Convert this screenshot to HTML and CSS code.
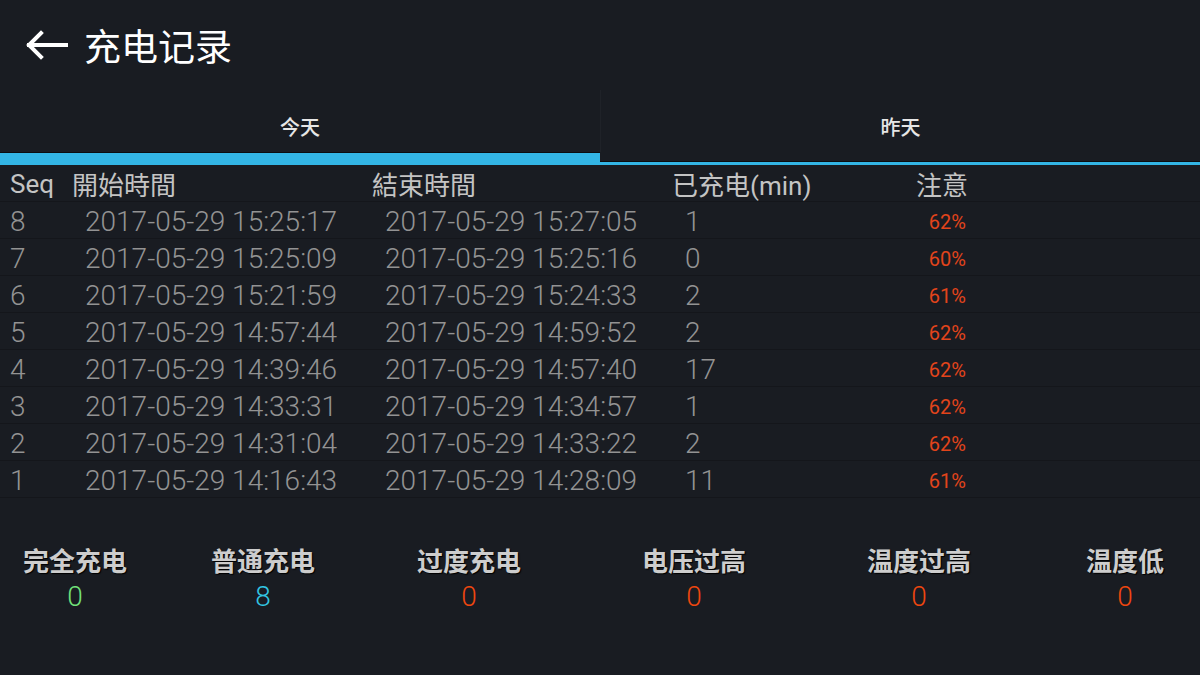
FILE: index.html
```html
<!DOCTYPE html>
<html lang="zh">
<head>
    <meta charset="UTF-8">
    <meta name="viewport" content="width=device-width, initial-scale=1.0">
    <title>充电记录</title>
    <link rel="stylesheet" href="styles.css">
</head>
<body>
    <div class="app">
        <div class="toolbar">
            <svg class="back" width="44" height="30" viewBox="0 0 44 30">
                <path d="M42 15 H5 M17 3 L5 15 L17 27" fill="none" stroke="#fff" stroke-width="4" stroke-linecap="square"/>
            </svg>
            <h1 class="title">充电记录</h1>
        </div>

        <div class="tabs">
            <div class="tab active">
                <div class="tab-label">今天</div>
                <div class="tab-bar"><div class="bar"></div></div>
            </div>
            <div class="tab">
                <div class="tab-label">昨天</div>
                <div class="tab-bar"><div class="bar"></div></div>
            </div>
        </div>

        <div class="records">
            <div class="row head">
                <span class="seq">Seq</span>
                <span>開始時間</span>
                <span>結束時間</span>
                <span>已充电(min)</span>
                <span>注意</span>
            </div>
            <div class="row"><span class="seq">8</span><span>2017-05-29 15:25:17</span><span>2017-05-29 15:27:05</span><span>1</span><span class="pct">62%</span></div>
            <div class="row"><span class="seq">7</span><span>2017-05-29 15:25:09</span><span>2017-05-29 15:25:16</span><span>0</span><span class="pct">60%</span></div>
            <div class="row"><span class="seq">6</span><span>2017-05-29 15:21:59</span><span>2017-05-29 15:24:33</span><span>2</span><span class="pct">61%</span></div>
            <div class="row"><span class="seq">5</span><span>2017-05-29 14:57:44</span><span>2017-05-29 14:59:52</span><span>2</span><span class="pct">62%</span></div>
            <div class="row"><span class="seq">4</span><span>2017-05-29 14:39:46</span><span>2017-05-29 14:57:40</span><span>17</span><span class="pct">62%</span></div>
            <div class="row"><span class="seq">3</span><span>2017-05-29 14:33:31</span><span>2017-05-29 14:34:57</span><span>1</span><span class="pct">62%</span></div>
            <div class="row"><span class="seq">2</span><span>2017-05-29 14:31:04</span><span>2017-05-29 14:33:22</span><span>2</span><span class="pct">62%</span></div>
            <div class="row"><span class="seq">1</span><span>2017-05-29 14:16:43</span><span>2017-05-29 14:28:09</span><span>11</span><span class="pct">61%</span></div>
        </div>

        <div class="stats">
            <div class="stat"><div class="stat-label">完全充电</div><div class="stat-value green">0</div></div>
            <div class="stat"><div class="stat-label">普通充电</div><div class="stat-value cyan">8</div></div>
            <div class="stat"><div class="stat-label">过度充电</div><div class="stat-value red">0</div></div>
            <div class="stat"><div class="stat-label">电压过高</div><div class="stat-value red">0</div></div>
            <div class="stat"><div class="stat-label">温度过高</div><div class="stat-value red">0</div></div>
            <div class="stat last"><div class="stat-label">温度低</div><div class="stat-value red">0</div></div>
        </div>
    </div>
</body>
</html>
```

FILE: styles.css
```css
* {
    margin: 0;
    padding: 0;
    box-sizing: border-box;
}

body {
    font-family: Roboto, 'Noto Sans CJK SC', sans-serif;
    background: #191c22;
    color: #939393;
    width: 1200px;
    height: 675px;
    overflow: hidden;
}

.toolbar {
    height: 90px;
    display: flex;
    align-items: center;
    padding-left: 24px;
    gap: 16px;
}

.title {
    font-family: 'Noto Sans CJK SC', sans-serif;
    font-size: 37px;
    font-weight: 400;
    color: #fff;
}

/* tabs */
.tabs {
    display: grid;
    grid-template-columns: 1fr 1fr;
}

.tab-label {
    height: 62px;
    padding-top: 10px;
    display: flex;
    align-items: center;
    justify-content: center;
    font-family: 'Noto Sans CJK SC', sans-serif;
    font-size: 20px;
    font-weight: 500;
    color: #e6e6e6;
}

.tab + .tab .tab-label {
    border-left: 1px solid #1f2228;
}

.tab-bar {
    height: 13px;
    display: flex;
    flex-direction: column;
    justify-content: flex-end;
}

.tab-bar .bar {
    height: 4px;
    background: #33b5e5;
    border-top: 1px solid #0c0d10;
}

.tab.active .bar {
    height: 13px;
}

/* records table */
.row {
    display: grid;
    grid-template-columns: 72px 300px 300px 244px 50px;
    height: 37px;
    align-items: center;
    padding-top: 3px;
    border-bottom: 1px solid #14161b;
    font-size: 28px;
    font-weight: 300;
    white-space: nowrap;
}

.row span {
    padding-left: 13px;
}

.row .seq {
    padding-left: 10px;
}

.row.head {
    color: #c4c4c4;
    font-size: 26px;
    font-weight: 400;
    padding-top: 0;
}

.row.head span {
    padding-left: 0;
}

.row.head .seq {
    padding-left: 10px;
}

.row .pct {
    padding-left: 0;
    text-align: right;
    font-size: 20px;
    font-weight: 400;
    color: #e2441b;
}

/* summary */
.stats {
    display: grid;
    grid-template-columns: 150px 226px 186px 264px 186px 1fr;
    padding-top: 45px;
    text-align: center;
}

.stat.last {
    padding-left: 38px;
}

.stat-label {
    font-family: 'Noto Sans CJK SC', sans-serif;
    font-size: 26px;
    font-weight: 700;
    line-height: 34px;
    color: #cdcdcd;
    text-shadow: 1px 1px 1px #000;
}

.stat-value {
    font-size: 28px;
    font-weight: 300;
    line-height: 40px;
}

.green { color: #72e27a; }
.cyan { color: #32c5e2; }
.red { color: #f0470f; }
```
